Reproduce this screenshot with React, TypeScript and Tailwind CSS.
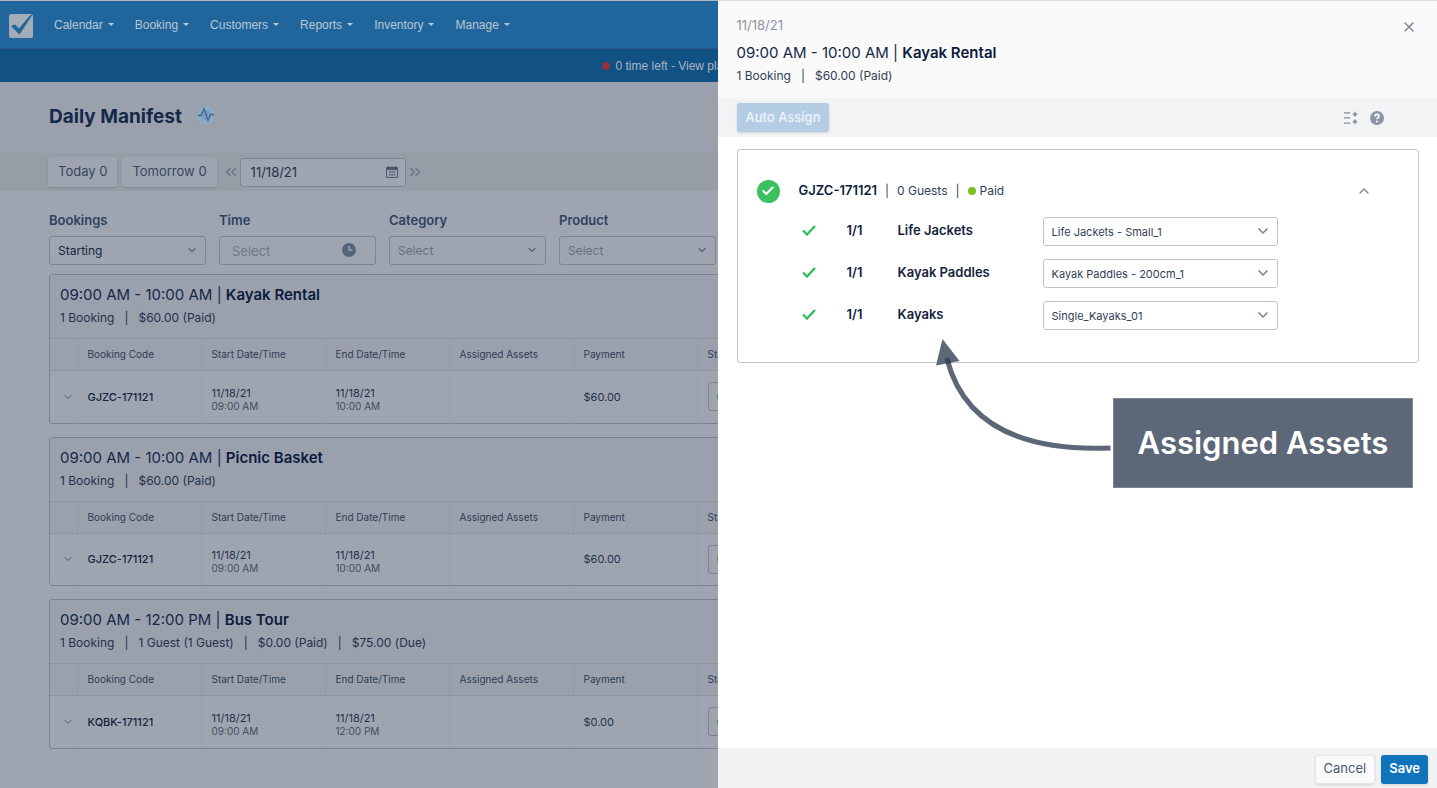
import { useState } from "react";
import { Check, ChevronDown, ChevronUp, ChevronsLeft, ChevronsRight, X } from "lucide-react";

const menuItems = ["Calendar", "Booking", "Customers", "Reports", "Inventory", "Manage"];

const trips = [
  {
    time: "09:00 AM - 10:00 AM",
    product: "Kayak Rental",
    details: ["1 Booking", "$60.00 (Paid)"],
    code: "GJZC-171121",
    start: "09:00 AM",
    end: "10:00 AM",
    payment: "$60.00",
  },
  {
    time: "09:00 AM - 10:00 AM",
    product: "Picnic Basket",
    details: ["1 Booking", "$60.00 (Paid)"],
    code: "GJZC-171121",
    start: "09:00 AM",
    end: "10:00 AM",
    payment: "$60.00",
  },
  {
    time: "09:00 AM - 12:00 PM",
    product: "Bus Tour",
    details: ["1 Booking", "1 Guest (1 Guest)", "$0.00 (Paid)", "$75.00 (Due)"],
    code: "KQBK-171121",
    start: "09:00 AM",
    end: "12:00 PM",
    payment: "$0.00",
  },
];

const assets = [
  { name: "Life Jackets", options: ["Life Jackets - Small_1", "Life Jackets - Small_2"] },
  { name: "Kayak Paddles", options: ["Kayak Paddles - 200cm_1", "Kayak Paddles - 200cm_2"] },
  { name: "Kayaks", options: ["Single_Kayaks_01", "Single_Kayaks_02"] },
];

function Details({ parts }: { parts: string[] }) {
  return (
    <p className="flex text-xs leading-[22px]">
      {parts.map((part, i) => (
        <span key={part} className="flex">
          {i > 0 && <span className="mx-2.5">|</span>}
          {part}
        </span>
      ))}
    </p>
  );
}

function FilterSelect({ id, label, options, dim }: { id: string; label: string; options: string[]; dim?: boolean }) {
  return (
    <div className="w-[157px]">
      <label htmlFor={id} className="block text-[13px] leading-5 font-semibold text-[#2c4260]">{label}</label>
      <div className="relative mt-1.5">
        <select
          id={id}
          className={`h-[29px] w-full appearance-none rounded-[3px] border border-[#7b8494] bg-transparent pl-2 text-xs ${dim ? "text-[#667182]" : "text-[#14233d]"}`}
        >
          {options.map((o) => <option key={o}>{o}</option>)}
        </select>
        <ChevronDown className="pointer-events-none absolute top-2 right-2 h-3 w-3 text-[#56647a]" strokeWidth={2.5} />
      </div>
    </div>
  );
}

function TripCard({ trip }: { trip: (typeof trips)[number] }) {
  return (
    <section className="overflow-hidden rounded-[3px] border border-[#7b8494]">
      <div className="h-[63px] bg-[#9ba1ac] px-2.5 pt-2 text-[#22324c]">
        <h2 className="text-[15px] leading-6 text-[#14284a]">
          {trip.time} | <span className="font-semibold text-[#0c1c3f]">{trip.product}</span>
        </h2>
        <Details parts={trip.details} />
      </div>
      <table className="w-full table-fixed border-collapse text-left">
        <colgroup>
          <col className="w-[27px]" />
          <col className="w-[124px]" />
          <col className="w-[124px]" />
          <col className="w-[124px]" />
          <col className="w-[124px]" />
          <col className="w-[124px]" />
          <col />
        </colgroup>
        <thead>
          <tr className="h-8 border-y border-[#8d94a1] bg-[#9ba1ac] text-[10px] text-[#2c3c55]">
            <th />
            {["Booking Code", "Start Date/Time", "End Date/Time", "Assigned Assets", "Payment", "Status"].map((h) => (
              <th key={h} className="border-l border-[#9298a5] px-2.5 font-normal">{h}</th>
            ))}
          </tr>
        </thead>
        <tbody>
          <tr className="h-[52px] text-[11px] text-[#22324c]">
            <td>
              <button aria-label="Expand booking" className="ml-3 block">
                <ChevronDown className="h-3 w-3 text-[#4a586d]" />
              </button>
            </td>
            <td className="border-l border-[#999fab] px-2.5 font-medium text-[#14233d]">{trip.code}</td>
            {[trip.start, trip.end].map((t, i) => (
              <td key={i} className="border-l border-[#999fab] px-2.5 pt-1 leading-[14px]">
                11/18/21
                <div className="text-[10px] leading-3 text-[#3f4d63]">{t}</div>
              </td>
            ))}
            <td className="border-l border-[#999fab]" />
            <td className="border-l border-[#999fab] px-2.5">{trip.payment}</td>
            <td className="border-l border-[#999fab] px-2.5">
              <button aria-label="Status" className="flex h-[29px] w-24 items-center rounded-[3px] border border-[#7b8494] px-2">
                <span className="h-2 w-2 rounded-full bg-[#4f8c33]" />
              </button>
            </td>
          </tr>
        </tbody>
      </table>
    </section>
  );
}

function AssignDrawer() {
  const [open, setOpen] = useState(true);

  return (
    <aside className="absolute inset-y-0 right-0 flex w-[calc(50%+1px)] flex-col border-t border-[#dcdcdc] bg-white text-[#2f3f57]">
      <header className="flex h-[97px] justify-between bg-[#fafafa] pt-3 pr-5 pl-[19px]">
        <div>
          <p className="text-[13px] leading-6 text-[#8c95a1]">11/18/21</p>
          <h2 className="mt-1 text-[15px] leading-6 text-[#14284a]">
            09:00 AM - 10:00 AM | <span className="font-semibold text-[#0c1c3f]">Kayak Rental</span>
          </h2>
          <Details parts={["1 Booking", "$60.00 (Paid)"]} />
        </div>
        <button aria-label="Close" className="mt-1.5 h-4 w-4">
          <X className="h-4 w-4 text-[#7b8696]" />
        </button>
      </header>

      <div className="flex h-[39px] items-center justify-between bg-[#f1f3f5] pr-[53px] pl-[19px]">
        <button disabled className="h-[29px] rounded-[3px] bg-[#b5cde4] px-[9px] text-[13px] font-medium text-[#edf4fa] shadow-sm">
          Auto Assign
        </button>
        <div className="flex gap-3 text-[#8791a0]">
          <button aria-label="Collapse all">
            <svg className="h-3.5 w-3.5" viewBox="0 0 14 14" fill="currentColor">
              <path d="M0 1.200h6.200v1.300H0zM0 6.300h6.200v1.300H0zM0 11.500h6.200v1.300H0z" />
              <path d="M10.300 0.800h1.400v1.800H14L11 6L8 2.600h2.300zM10.300 13.200h1.400v-1.800H14L11 8L8 11.400h2.300z" />
            </svg>
          </button>
          <button aria-label="Help">
            <svg className="h-3.5 w-3.5" viewBox="0 0 14 14">
              <circle cx="7" cy="7" r="7" fill="#8c95a3" />
              <path d="M5 5.4c0-1.3.9-2 2-2s2 .7 2 1.8c0 1.5-2 1.500-2 3.100" fill="none" stroke="#fff" strokeWidth="1.6" />
              <circle cx="7" cy="10.4" r="1" fill="#fff" />
            </svg>
          </button>
        </div>
      </div>

      <div className="flex-1 pt-3 pr-[18px] pl-[19px]">
        <section className="relative h-[214px] rounded-[3px] border border-[#c3c7cd] pt-[29px]">
          <div className="flex h-6 items-center pr-[46px] pl-[19px] text-xs">
            <span className="flex h-[23px] w-[23px] items-center justify-center rounded-full bg-[#3cbf5f]">
              <Check className="h-3.5 w-3.5 text-white" strokeWidth={3.5} />
            </span>
            <span className="ml-[19px] text-[13px] font-semibold text-[#0c1c3f]">GJZC-171121</span>
            <span className="mx-2">|</span>
            0 Guests
            <span className="mx-2">|</span>
            <span className="mr-1 h-2 w-2 rounded-full bg-[#7bbf21]" />
            Paid
            <button aria-label="Toggle assets" className="ml-auto" onClick={() => setOpen(!open)}>
              <ChevronUp className="h-4 w-4 text-[#7b8696]" />
            </button>
          </div>

          {open && (
            <div className="mt-3.5 ml-16 flex flex-col gap-[13px]">
              {assets.map((asset) => (
                <div key={asset.name} className="grid h-[29px] grid-cols-[45px_51px_145px_235px] items-center text-[13px] leading-[18px] font-semibold text-[#14233d]">
                  <svg className="mb-1 h-3 w-3.5" viewBox="0 0 14 12" fill="none" stroke="#26bd58" strokeWidth="2.200">
                    <path d="M1 6.500l4 4 8-8.500" />
                  </svg>
                  <span className="mb-1">1/1</span>
                  <label htmlFor={asset.name} className="mb-1">{asset.name}</label>
                  <div className="relative">
                    <select
                      id={asset.name}
                      className="h-[29px] w-full appearance-none rounded-[3px] border border-[#bfc4cb] bg-white pl-2 text-[11px] font-normal text-[#2f3f57]"
                    >
                      {asset.options.map((o) => <option key={o}>{o}</option>)}
                    </select>
                    <ChevronDown className="pointer-events-none absolute top-1.5 right-[7px] h-4 w-4 text-[#7b8696]" strokeWidth={2.5} />
                  </div>
                </div>
              ))}
            </div>
          )}

          {/* callout */}
          <div className="absolute top-[189px] right-[5px] flex items-start">
            <svg className="h-[120px] w-[177px] shrink-0" viewBox="0 0 177 120" fill="none">
              <path d="M6.500 0L23.500 22L0 26.500Z" fill="#5c6878" />
              <path d="M11 20C26 78 74 113 174.500 109" stroke="#5c6878" strokeWidth="5" />
              <path d="M8.500 19.500L13.500 18.500L15.500 24L10 25Z" fill="#3b495d" />
            </svg>
            <div className="mt-[59px] flex h-[90px] w-[300px] items-center justify-center border border-[#7c8795] bg-[#5c6878] text-[31px] font-semibold text-white">
              Assigned Assets
            </div>
          </div>
        </section>
      </div>

      <footer className="flex h-10 items-center justify-end gap-1.5 bg-[#f1f2f4] pt-0.5 pr-[9px] text-[13px]">
        <button className="h-[29px] rounded-[3px] border border-[#e4e6e9] bg-[#fafafa] px-2 text-[#4a5a70] shadow-sm">Cancel</button>
        <button className="h-[29px] rounded-[3px] bg-[#1173ba] px-2 font-semibold text-white shadow-sm">Save</button>
      </footer>
    </aside>
  );
}

export default function App() {
  return (
    <div className="relative min-h-screen overflow-hidden bg-[#9fa5b0] font-['Inter',sans-serif]">
      <nav className="flex h-12 items-center gap-[21px] border-t border-[#b4b8be] bg-[#20669c] pl-[9px] font-['Liberation_Sans',sans-serif] text-xs text-[#b9c6d4]">
        <a href="#" aria-label="Home" className="mt-0.5">
          <svg className="h-6 w-6" viewBox="0 0 24 24">
            <rect width="24" height="24" rx="2.500" fill="#a4acb8" />
            <path d="M2 12L6 10.500L10 14.500L20.500 2L24 0L10.500 20.500Z" fill="#20669c" />
          </svg>
        </a>
        {menuItems.map((item) => (
          <a key={item} href="#" className="flex items-center gap-[5px]">
            {item}
            <svg className="h-[3px] w-1.5" viewBox="0 0 6 3" fill="currentColor"><path d="M0 0h6L3 3z" /></svg>
          </a>
        ))}
      </nav>
      <div className="flex h-[34px] items-center border-t border-[#2a5580] bg-[#115184] pl-[42%] font-['Liberation_Sans',sans-serif] text-xs text-[#a9b5c4]">
        <span className="mr-1.5 -ml-0.5 h-2 w-2 rounded-full bg-[#962f3e]" />
        <a href="#">0 time left - View plans</a>
      </div>

      <div className="flex h-[71px] items-center gap-3.5 bg-[#9ba1ac] pl-[49px]">
        <h1 className="text-[19px] font-bold text-[#14284a]">Daily Manifest</h1>
        <svg className="mb-1.5 h-5 w-5" viewBox="0 0 20 20" fill="none">
          <circle cx="10" cy="10" r="9.500" fill="#8da9c4" />
          <circle cx="10" cy="10" r="5" fill="#729fc8" />
          <path d="M2 10.500h3l3-7 4 12 2.500-6H18" stroke="#52647d" strokeWidth="1.300" />
        </svg>
      </div>

      <div className="flex h-[38px] items-center bg-[#979da6] pl-12 text-[13px] text-[#34455f]">
        <button className="h-[30px] rounded-[3px] bg-[#9fa5b0] px-2.5 shadow">Today 0</button>
        <button className="ml-[5px] h-[30px] rounded-[3px] bg-[#9fa5b0] px-2.5 shadow">Tomorrow 0</button>
        <button aria-label="Previous day" className="ml-[5px]">
          <ChevronsLeft className="h-[18px] w-[18px] text-[#667182]" strokeWidth={1.5} />
        </button>
        <div className="relative">
          <input
            aria-label="Date"
            defaultValue="11/18/21"
            className="block h-[29px] w-[166px] rounded-[3px] border border-[#7b8494] bg-[#9fa5b0] pl-2.5 text-[13px] text-[#22324c]"
          />
          <svg className="absolute top-2 right-2 h-3 w-3" viewBox="0 0 12 12" fill="#4a586d">
            <path fillRule="evenodd" d="M1 1h1V0h1v1h2.500V0h1v1H9V0h1v1h1a1 1 0 0 1 1 1v9a1 1 0 0 1-1 1H1a1 1 0 0 1-1-1V2a1 1 0 0 1 1-1zM1 4v7h10V4z" />
            <path d="M3 5h1.500v1.500H3zM5.300 5h1.500v1.500H5.300zM7.600 5h1.500v1.500H7.600zM3 8h1.500v1.500H3zM5.300 8h1.500v1.500H5.300zM7.600 8h1.500v1.500H7.600z" />
          </svg>
        </div>
        <button aria-label="Next day">
          <ChevronsRight className="h-[18px] w-[18px] text-[#667182]" strokeWidth={1.5} />
        </button>
      </div>

      <main className="px-[49px] pt-[19px] pb-5">
        <div className="flex gap-[13px]">
          <FilterSelect id="bookings" label="Bookings" options={["Starting", "Ending"]} />
          <div className="w-[157px]">
            <label htmlFor="time" className="block text-[13px] leading-5 font-semibold text-[#2c4260]">Time</label>
            <div className="relative mt-1.5">
              <input
                id="time"
                placeholder="Select"
                className="block h-[29px] w-full rounded-[3px] border border-[#7b8494] bg-transparent pl-3 text-[13px] placeholder:text-[#6f7988]"
              />
              <svg className="absolute top-[7px] right-5 h-3.5 w-3.5" viewBox="0 0 14 14">
                <circle cx="7" cy="7" r="7" fill="#56647a" />
                <path d="M7 3v4h3.500" fill="none" stroke="#9fa5b0" strokeWidth="1.500" />
              </svg>
            </div>
          </div>
          <FilterSelect id="category" label="Category" options={["Select"]} dim />
          <FilterSelect id="product" label="Product" options={["Select"]} dim />
        </div>

        <div className="mt-[9px] flex flex-col gap-[13px]">
          {trips.map((trip) => <TripCard key={trip.product} trip={trip} />)}
        </div>
      </main>

      <AssignDrawer />
    </div>
  );
}
